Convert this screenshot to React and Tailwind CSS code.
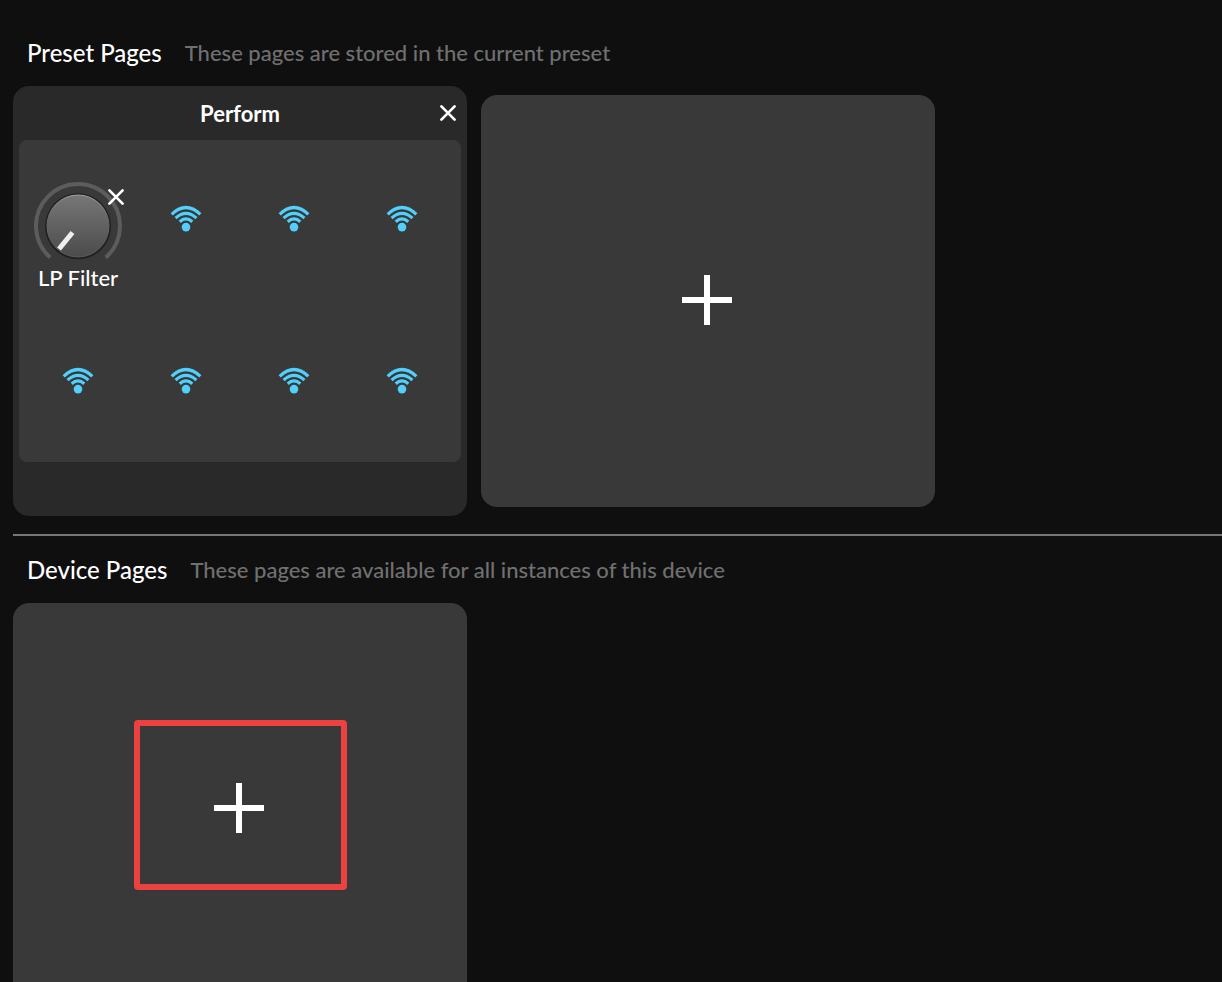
import React, { useState } from "react";

const CloseIcon = () => (
    <svg width="18" height="18" viewBox="0 0 18 18" fill="none" stroke="currentColor" strokeWidth="2.7" strokeLinecap="round" aria-hidden="true">
        <path d="M2.4 2.4 15.6 15.6M15.6 2.4 2.4 15.6" />
    </svg>
);

const PlusIcon = () => (
    <svg width="50" height="50" viewBox="0 0 50 50" fill="currentColor" aria-hidden="true">
        <path d="M22 0h6v22h22v6H28v22h-6V28H0v-6h22z" />
    </svg>
);

const SignalIcon = () => (
    <svg width="32" height="28" viewBox="0 0 32 28" fill="none" stroke="currentColor" strokeWidth="3.2" aria-hidden="true">
        <path d="M1.7 9.3Q16-4.3 30.3 9.3" />
        <path d="M5.6 13.1Q16 3.7 26.4 13.1" />
        <path d="M9.7 16.7Q16 11.1 22.3 16.7" />
        <circle cx="16" cy="22.1" r="4.3" fill="currentColor" stroke="none" />
    </svg>
);

const KnobIcon = () => (
    <svg width="88" height="80" viewBox="0 0 88 80" fill="none" aria-hidden="true">
        <defs>
            <linearGradient id="knobFace" x1="0" y1="0" x2="0" y2="1">
                <stop offset="0" stopColor="#777777" />
                <stop offset="1" stopColor="#4b4b4b" />
            </linearGradient>
            <linearGradient id="knobEdge" x1="0" y1="0" x2="0" y2="1">
                <stop offset="0" stopColor="#a0a0a0" />
                <stop offset="0.4" stopColor="#686868" />
                <stop offset="1" stopColor="#585858" />
            </linearGradient>
        </defs>
        <path d="M16.2 75.5A42 42 0 1 1 71.8 75.5" stroke="#5c5c5c" strokeWidth="4" />
        <circle cx="44" cy="44.3" r="33" fill="#202020" />
        <circle cx="44" cy="44" r="31" fill="url(#knobFace)" stroke="url(#knobEdge)" strokeWidth="1" />
        <path d="M38.5 50.5 25 67" stroke="#eeeeee" strokeWidth="5" />
    </svg>
);

const SectionHeader = ({ title, description }) => (
    <div className="flex items-center gap-[23px] px-3.5">
        <h2 className="text-2xl leading-[34px] font-medium text-white">{title}</h2>
        <p className="text-[22px] leading-[34px] font-medium text-[#707070]">{description}</p>
    </div>
);

const AddPageButton = ({ label, onClick }) => (
    <button
        type="button"
        aria-label={label}
        onClick={onClick}
        className="flex h-[412px] w-[454px] shrink-0 items-center justify-center rounded-2xl bg-[#393939] pr-0.5 pb-0.5 text-white"
    >
        <PlusIcon />
    </button>
);

const PageCard = ({ page, onRemoveControl, onClose }) => (
    <article className="h-[430px] w-[454px] shrink-0 rounded-2xl bg-[#292929] px-1.5">
        <header className="grid h-[54px] grid-cols-[32px_1fr_32px] items-center">
            <h3 className="col-start-2 pt-0.5 text-center text-[22px] leading-8 font-bold text-white">{page.name}</h3>
            <button type="button" aria-label="Close page" onClick={onClose} className="flex justify-end pr-1 text-white">
                <CloseIcon />
            </button>
        </header>
        <div className="grid grid-cols-4 grid-rows-[158px_158px] gap-y-1 rounded-lg bg-[#393939] px-[5px] pb-0.5">
            {page.slots.map((slot, i) =>
                slot ? (
                    <div key={i} className="relative flex flex-col items-center pt-[42px] text-white">
                        <KnobIcon />
                        <span className="text-[22px] leading-8 font-medium">{slot}</span>
                        <button
                            type="button"
                            aria-label={`Remove ${slot}`}
                            onClick={() => onRemoveControl(i)}
                            className="absolute top-12 right-[7px]"
                        >
                            <CloseIcon />
                        </button>
                    </div>
                ) : (
                    <button key={i} type="button" aria-label="Learn control" className="flex items-center justify-center text-[#52cffb]">
                        <SignalIcon />
                    </button>
                )
            )}
        </div>
    </article>
);

const App = () => {
    const [presetPages, setPresetPages] = useState([
        { name: "Perform", slots: ["LP Filter", null, null, null, null, null, null, null] }
    ]);
    const [devicePages, setDevicePages] = useState([]);

    const newPage = (pages) => [...pages, { name: `Page ${pages.length + 1}`, slots: Array(8).fill(null) }];

    const closePage = (setPages) => (index) => {
        setPages((pages) => pages.filter((_, i) => i !== index));
    };

    const removeControl = (setPages) => (index, slotIndex) => {
        setPages((pages) =>
            pages.map((page, i) =>
                i === index ? { ...page, slots: page.slots.map((s, j) => (j === slotIndex ? null : s)) } : page
            )
        );
    };

    const renderPages = (pages, setPages) =>
        pages.map((page, i) => (
            <PageCard
                key={i}
                page={page}
                onClose={() => closePage(setPages)(i)}
                onRemoveControl={(slot) => removeControl(setPages)(i, slot)}
            />
        ));

    return (
        <main className="h-screen overflow-hidden bg-[#0f0f0f] pl-[13px] font-['Lato',sans-serif]">
            <section className="border-b-2 border-[#777777] pt-9 pb-[18px]">
                <SectionHeader title="Preset Pages" description="These pages are stored in the current preset" />
                <div className="mt-4 flex items-center gap-3.5">
                    {renderPages(presetPages, setPresetPages)}
                    <AddPageButton label="Add preset page" onClick={() => setPresetPages(newPage)} />
                </div>
            </section>

            <section className="pt-[17px]">
                <SectionHeader title="Device Pages" description="These pages are available for all instances of this device" />
                <div className="mt-4 flex items-center gap-3.5">
                    {renderPages(devicePages, setDevicePages)}
                    <div className="relative">
                        <AddPageButton label="Add device page" onClick={() => setDevicePages(newPage)} />
                        <div className="pointer-events-none absolute top-[117px] left-[121px] h-[170px] w-[213px] rounded-sm border-6 border-[#eb4141]" />
                    </div>
                </div>
            </section>
        </main>
    );
};

export default App;
